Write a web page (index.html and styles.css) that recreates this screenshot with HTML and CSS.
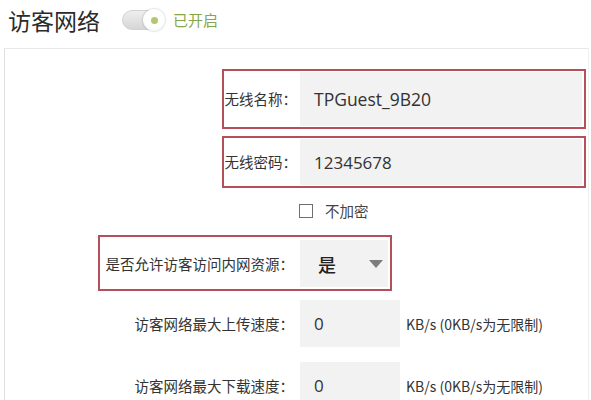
FILE: index.html
```html
<!DOCTYPE html>
<html lang="zh-CN">
<head>
  <meta charset="UTF-8">
  <meta name="viewport" content="width=device-width, initial-scale=1.0">
  <title>访客网络</title>
  <link rel="stylesheet" href="styles.css">
</head>
<body>
  <header class="top">
    <h1>访客网络</h1>
    <span class="switch"><span class="knob"><span class="dot"></span></span></span>
    <span class="state">已开启</span>
  </header>
  <main class="panel">
    <div class="row">
      <div class="field mark wide">
        <label class="label short">无线名称：</label>
        <div class="control tall">TPGuest_9B20</div>
      </div>
    </div>
    <div class="row gap-7">
      <div class="field mark wide">
        <label class="label short">无线密码：</label>
        <div class="control mid">12345678</div>
      </div>
    </div>
    <div class="row check-row">
      <span class="checkbox"></span>
      <span class="check-text">不加密</span>
    </div>
    <div class="row gap-12">
      <div class="field mark select-field">
        <label class="label long">是否允许访客访问内网资源：</label>
        <div class="select">
          <span class="select-value">是</span>
          <span class="caret"></span>
        </div>
      </div>
    </div>
    <div class="row gap-9">
      <label class="label plain">访客网络最大上传速度：</label>
      <div class="control small">0</div>
      <span class="unit">KB/s (0KB/s为无限制)</span>
    </div>
    <div class="row gap-15">
      <label class="label plain">访客网络最大下载速度：</label>
      <div class="control small">0</div>
      <span class="unit">KB/s (0KB/s为无限制)</span>
    </div>
  </main>
</body>
</html>
```

FILE: styles.css
```css
body {
  margin: 0;
  background: #fff;
  color: #333;
  font-family: "Noto Sans CJK SC", "Noto Sans", sans-serif;
  overflow: hidden;
}
.top {
  display: flex;
  align-items: center;
  height: 40px;
  padding-left: 8px;
}
.top h1 {
  margin: 0;
  font-size: 23px;
  font-weight: normal;
  line-height: 30px;
  color: #2b2b2b;
}
.switch {
  display: flex;
  align-items: center;
  justify-content: flex-end;
  width: 40px;
  height: 18px;
  margin-left: 22px;
  border: 1px solid #d2d2d2;
  border-radius: 10px;
  background: linear-gradient(#eeeeee, #d6d6d6);
}
.knob {
  display: flex;
  align-items: center;
  justify-content: center;
  width: 22px;
  height: 22px;
  margin-right: -2px;
  border-radius: 50%;
  background: radial-gradient(circle at 50% 40%, #ffffff 55%, #ececec);
  box-shadow: 0 0 2px rgba(0, 0, 0, 0.35);
}
.dot {
  width: 7px;
  height: 7px;
  border-radius: 50%;
  background: #b2c86a;
}
.state {
  margin-left: 9px;
  font-size: 15px;
  color: #86a64a;
  line-height: 20px;
}
.panel {
  width: 583px;
  margin: 8px 0 0 4px;
  padding-top: 20px;
  border-top: 1px solid #e8e8e8;
  border-left: 1px solid #e0e0e0;
  border-right: 1px solid #efefef;
}
.row {
  display: flex;
  align-items: center;
}
.gap-7 { margin-top: 7px; }
.gap-9 { margin-top: 9px; }
.gap-12 { margin-top: 12px; }
.gap-15 { margin-top: 15px; }
.field {
  display: flex;
  align-items: center;
}
.mark {
  border: 2px solid #b44f5b;
  padding: 1px 2px 1px 0;
}
.wide {
  margin-left: 217px;
  width: 358px;
}
.select-field {
  margin-left: 93px;
  padding: 3px 2px 2px 0;
}
.label {
  box-sizing: border-box;
  padding-right: 6px;
  text-align: right;
  font-size: 14.5px;
  line-height: 20px;
  color: #333;
  white-space: nowrap;
}
.label.short {
  width: 76px;
  padding-right: 3px;
}
.label.long { width: 200px; }
.label.plain { width: 295px; }
.control {
  box-sizing: border-box;
  display: flex;
  align-items: center;
  padding-left: 14px;
  background: #f2f2f2;
  font-family: "Open Sans", "Noto Sans CJK SC", sans-serif;
  font-size: 17px;
  color: #333;
}
.wide .control { flex: 1; }
.tall { height: 54px; font-size: 17.5px; }
.mid { height: 46px; }
.small {
  width: 100px;
  height: 47px;
}
.check-row {
  margin-top: 11px;
  height: 24px;
  padding-left: 294px;
}
.checkbox {
  box-sizing: border-box;
  width: 14px;
  height: 14px;
  border: 1px solid #6f6f6f;
  background: #fff;
}
.check-text {
  margin-left: 12px;
  font-size: 14.5px;
  line-height: 20px;
  color: #444;
}
.select {
  box-sizing: border-box;
  display: flex;
  align-items: center;
  justify-content: space-between;
  width: 88px;
  height: 47px;
  padding: 0 5px 0 18px;
  background: #f2f2f2;
}
.select-value {
  font-size: 18px;
  font-weight: 500;
  color: #222;
}
.caret {
  width: 0;
  height: 0;
  border-left: 7px solid transparent;
  border-right: 7px solid transparent;
  border-top: 8px solid #7d7d7d;
}
.unit {
  margin-left: 6px;
  font-size: 14px;
  line-height: 20px;
  color: #333;
}
```
